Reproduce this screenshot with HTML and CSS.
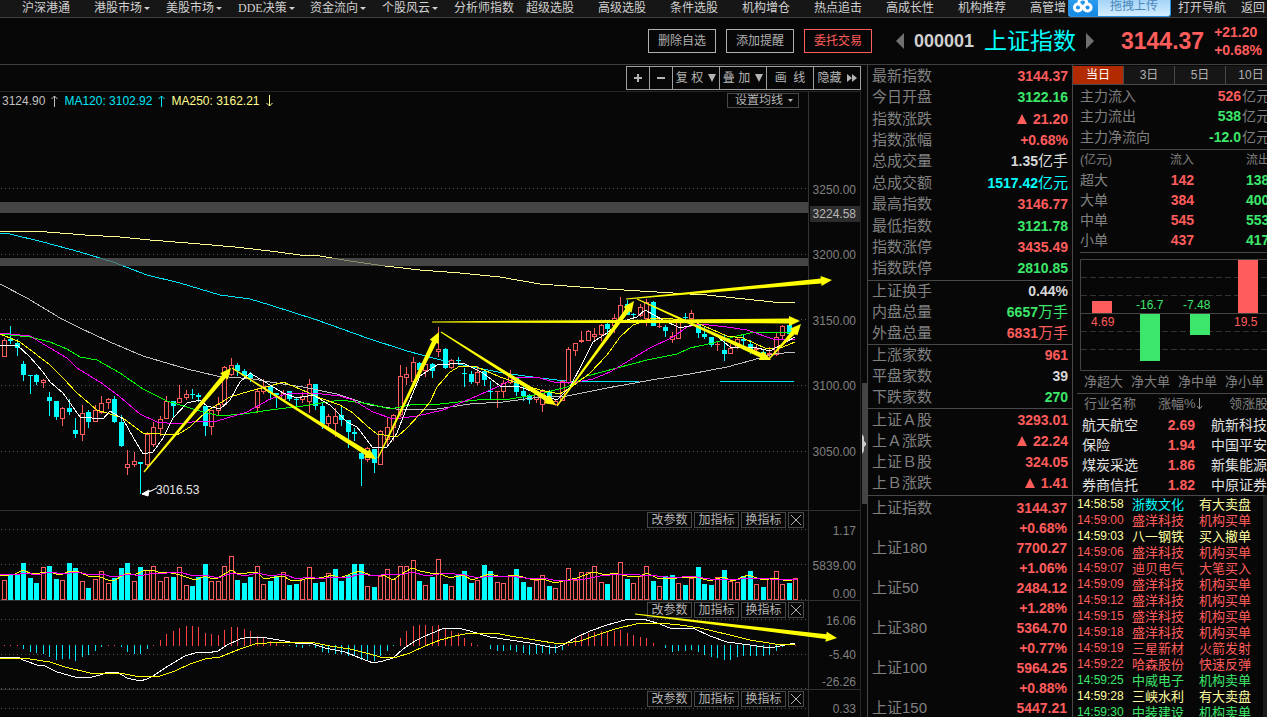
FILE: index.html
```html
<!DOCTYPE html>
<html lang="zh-CN">
<head>
<meta charset="utf-8">
<title>上证指数 000001</title>
<link rel="stylesheet" href="styles.css">
</head>
<body>
<nav class="nav">
  <div class="nav-list">
    <a href="#">沪深港通</a>
    <a href="#" class="has-menu">港股市场</a>
    <a href="#" class="has-menu">美股市场</a>
    <a href="#" class="has-menu dde">DDE决策</a>
    <a href="#" class="has-menu">资金流向</a>
    <a href="#" class="has-menu">个股风云</a>
    <a href="#">分析师指数</a>
    <a href="#">超级选股</a>
    <a href="#">高级选股</a>
    <a href="#">条件选股</a>
    <a href="#">机构增仓</a>
    <a href="#">热点追击</a>
    <a href="#">高成长性</a>
    <a href="#">机构推荐</a>
    <a href="#">高管增</a>
  </div>
  <button class="upload" type="button">
    <span class="upload-logo">
      <svg width="22" height="16" viewBox="0 0 22 16" aria-hidden="true">
        <g fill="none" stroke="#fff" stroke-width="3">
          <circle cx="6" cy="7.500" r="3.600"/>
          <circle cx="15.500" cy="7.500" r="3.600"/>
          <path d="M7 3.500Q6.500 -1 10.800 -1Q15 -1 14.500 3.500M8.500 5L13 10"/>
        </g>
      </svg>
    </span>
    <span class="upload-text">拖拽上传</span>
  </button>
  <div class="nav-right"><a href="#">打开导航</a><a href="#">返回</a></div>
</nav>

<header class="head">
  <button class="btn" type="button">删除自选</button>
  <button class="btn" type="button">添加提醒</button>
  <button class="btn trade" type="button">委托交易</button>
  <div class="title">
    <button class="step" type="button" aria-label="上一个"><svg width="8" height="16" viewBox="0 0 8 16"><path d="M8 0V16L0 8Z" fill="#707070"/></svg></button>
    <span class="code">000001</span>
    <h1>上证指数</h1>
    <button class="step" type="button" aria-label="下一个"><svg width="8" height="16" viewBox="0 0 8 16"><path d="M0 0V16L8 8Z" fill="#707070"/></svg></button>
  </div>
  <span class="last">3144.37</span>
  <div class="delta"><span>+21.20</span><span>+0.68%</span></div>
</header>

<main class="main">
  <section class="chart-col">
    <div class="toolbar">
      <button class="sq" type="button" aria-label="放大"><svg width="8" height="8"><path d="M0 4H8M4 0V8" stroke="#b4b4b4" stroke-width="2"/></svg></button>
      <button class="sq" type="button" aria-label="缩小"><svg width="8" height="8"><path d="M0 4H8" stroke="#b4b4b4" stroke-width="2"/></svg></button>
      <button type="button">复 权 <svg width="8" height="8"><path d="M0 0H8L4 8Z" fill="#b4b4b4"/></svg></button>
      <button type="button">叠 加 <svg width="8" height="8"><path d="M0 0H8L4 8Z" fill="#b4b4b4"/></svg></button>
      <button type="button">画&nbsp; 线</button>
      <button type="button">隐藏 <svg width="10" height="8"><path d="M0 0L5 4L0 8ZM5 0L10 4L5 8Z" fill="#b4b4b4"/></svg></button>
    </div>
    <div class="charts">
      <section class="panel">
        <div class="plot">
          <svg id="price" viewBox="0 92 808 418" preserveAspectRatio="none"></svg>
          <div class="legend">
            <span class="ma60">3124.90</span>
            <svg class="ma60" width="7" height="12"><path d="M3.500 12V1M0.500 4L3.500 1L6.500 4"/></svg>
            <span class="ma120">MA120: 3102.92</span>
            <svg class="ma120" width="7" height="12"><path d="M3.500 12V1M0.500 4L3.500 1L6.500 4"/></svg>
            <span class="ma250">MA250: 3162.21</span>
            <svg class="ma250" width="7" height="12"><path d="M3.500 0V11M0.500 8L3.500 11L6.500 8"/></svg>
          </div>
          <label class="ma-set"><select aria-label="设置均线"><option>设置均线</option></select><svg width="5" height="3"><path d="M0 0H5L2.500 3Z" fill="#b4b4b4"/></svg></label>
        </div>
        <div class="axis" data-from="92" data-to="510" data-labels="3250.00@189,3200.00@255,3150.00@320,3100.00@386,3050.00@452,3224.58@213*"></div>
      </section>
      <section class="panel">
        <div class="plot">
          <svg id="volume" viewBox="0 511 808 89" preserveAspectRatio="none"></svg>
          <div class="tools"><button type="button">改参数</button><button type="button">加指标</button><button type="button">换指标</button><button class="close" type="button" aria-label="关闭"><svg width="10" height="10"><path d="M0 0L10 10M10 0L0 10"/></svg></button></div>
        </div>
        <div class="axis" data-from="511" data-to="600" data-labels="1.17@531,5839.00@565,0.00@593"></div>
      </section>
      <section class="panel">
        <div class="plot">
          <svg id="macd" viewBox="0 601 808 88" preserveAspectRatio="none"></svg>
          <div class="tools"><button type="button">改参数</button><button type="button">加指标</button><button type="button">换指标</button><button class="close" type="button" aria-label="关闭"><svg width="10" height="10"><path d="M0 0L10 10M10 0L0 10"/></svg></button></div>
        </div>
        <div class="axis" data-from="601" data-to="689" data-labels="16.06@620,-5.40@655,-26.26@682"></div>
      </section>
      <section class="panel">
        <div class="plot">
          <svg id="extra" viewBox="0 690 808 27" preserveAspectRatio="none"></svg>
          <div class="tools"><button type="button">改参数</button><button type="button">加指标</button><button type="button">换指标</button><button class="close" type="button" aria-label="关闭"><svg width="10" height="10"><path d="M0 0L10 10M10 0L0 10"/></svg></button></div>
        </div>
        <div class="axis" data-from="690" data-to="717" data-labels="0.33@709"></div>
      </section>
      <svg id="drawings" viewBox="0 92 860 625" preserveAspectRatio="none"></svg>
    </div>
  </section>
  <div class="gutter"><div class="thumb"><svg width="5" height="20"><path d="M0 0L2 3V7L4 9V11L2 13V17L0 20Z" fill="#ccc"/></svg></div></div>

  <section class="quotes">
    <dl class="group g10">
      <div><dt>最新指数</dt><dd class="up">3144.37</dd></div>
      <div><dt>今日开盘</dt><dd class="down">3122.16</dd></div>
      <div><dt>指数涨跌</dt><dd class="up"><i class="tri"></i>21.20</dd></div>
      <div><dt>指数涨幅</dt><dd class="up">+0.68%</dd></div>
      <div><dt>总成交量</dt><dd class="flat">1.35<span>亿手</span></dd></div>
      <div><dt>总成交额</dt><dd class="cyan">1517.42<span>亿元</span></dd></div>
      <div><dt>最高指数</dt><dd class="up">3146.77</dd></div>
      <div><dt>最低指数</dt><dd class="down">3121.78</dd></div>
      <div><dt>指数涨停</dt><dd class="up">3435.49</dd></div>
      <div><dt>指数跌停</dt><dd class="down">2810.85</dd></div>
    </dl>
    <dl class="group g3">
      <div><dt>上证换手</dt><dd class="flat">0.44%</dd></div>
      <div><dt>内盘总量</dt><dd class="down">6657<span>万手</span></dd></div>
      <div><dt>外盘总量</dt><dd class="up">6831<span>万手</span></dd></div>
    </dl>
    <dl class="group g3">
      <div><dt>上涨家数</dt><dd class="up">961</dd></div>
      <div><dt>平盘家数</dt><dd class="flat">39</dd></div>
      <div><dt>下跌家数</dt><dd class="down">270</dd></div>
    </dl>
    <dl class="group g4">
      <div><dt>上证Ａ股</dt><dd class="up">3293.01</dd></div>
      <div><dt>上Ａ涨跌</dt><dd class="up"><i class="tri"></i>22.24</dd></div>
      <div><dt>上证Ｂ股</dt><dd class="up">324.05</dd></div>
      <div><dt>上Ｂ涨跌</dt><dd class="up"><i class="tri"></i>1.41</dd></div>
    </dl>
    <dl class="indices">
      <div><dt>上证指数</dt><dd>3144.37</dd><dd>+0.68%</dd></div>
      <div><dt>上证180</dt><dd>7700.27</dd><dd>+1.06%</dd></div>
      <div><dt>上证50</dt><dd>2484.12</dd><dd>+1.28%</dd></div>
      <div><dt>上证380</dt><dd>5364.70</dd><dd>+0.77%</dd></div>
      <div><dt>上证100</dt><dd>5964.25</dd><dd>+0.88%</dd></div>
      <div><dt>上证150</dt><dd>5447.21</dd></div>
    </dl>
  </section>

  <aside class="side">
    <div class="tabs"><button class="on" type="button">当日</button><button type="button">3日</button><button type="button">5日</button><button type="button">10日</button></div>
    <dl class="flow">
      <div><dt>主力流入</dt><dd class="up">526</dd><dd class="unit">亿元</dd></div>
      <div><dt>主力流出</dt><dd class="down">538</dd><dd class="unit">亿元</dd></div>
      <div><dt>主力净流向</dt><dd class="down">-12.0</dd><dd class="unit">亿元</dd></div>
    </dl>
    <table class="orders">
      <thead><tr><th>(亿元)</th><th>流入</th><th>流出</th></tr></thead>
      <tbody>
        <tr><td>超大</td><td class="up">142</td><td class="down">138</td></tr>
        <tr><td>大单</td><td class="up">384</td><td class="down">400</td></tr>
        <tr><td>中单</td><td class="up">545</td><td class="down">553</td></tr>
        <tr><td>小单</td><td class="up">437</td><td class="down">417</td></tr>
      </tbody>
    </table>
    <div class="net">
      <svg width="200" height="112" viewBox="1080 259 200 112">
        <g stroke="#333" stroke-dasharray="6 3"><path d="M1081 277.500H1280M1081 295.500H1280M1081 331.500H1280M1081 349.500H1280"/></g>
        <path d="M1280 259.500H1080.500V370.500H1280M1080 313.500H1280" fill="none" stroke="#444"/>
        <g fill="#ff5c5c"><path d="M1092 301h20v12h-20zM1238 260h20v53h-20z"/><text x="1091" y="326">4.69</text><text x="1234" y="326">19.5</text></g>
        <g fill="#3ce66a"><path d="M1140 314h20v47h-20zM1190 314h20v21h-20z"/><text x="1136" y="309">-16.7</text><text x="1183" y="309">-7.48</text></g>
      </svg>
      <div class="net-labels"><span>净超大</span><span>净大单</span><span>净中单</span><span>净小单</span></div>
    </div>
    <table class="sectors">
      <thead><tr><th>行业名称</th><th>涨幅%<svg width="7" height="12"><path d="M3.500 0V11M1 8L3.500 11L6 8" fill="none" stroke="#909090"/></svg></th><th>领涨股</th></tr></thead>
      <tbody>
        <tr><td>航天航空</td><td>2.69</td><td>航新科技</td></tr>
        <tr><td>保险</td><td>1.94</td><td>中国平安</td></tr>
        <tr><td>煤炭采选</td><td>1.86</td><td>新集能源</td></tr>
        <tr><td>券商信托</td><td>1.82</td><td>中原证券</td></tr>
      </tbody>
    </table>
    <div class="news">
      <table>
        <tr class="pale"><td>14:58:58</td><td class="cyan">浙数文化</td><td>有大卖盘</td></tr>
        <tr class="up"><td>14:59:00</td><td>盛洋科技</td><td>机构买单</td></tr>
        <tr class="pale"><td>14:59:03</td><td>八一钢铁</td><td>买入撤单</td></tr>
        <tr class="up"><td>14:59:06</td><td>盛洋科技</td><td>机构买单</td></tr>
        <tr class="up"><td>14:59:07</td><td>迪贝电气</td><td>大笔买入</td></tr>
        <tr class="up"><td>14:59:09</td><td>盛洋科技</td><td>机构买单</td></tr>
        <tr class="up"><td>14:59:12</td><td>盛洋科技</td><td>机构买单</td></tr>
        <tr class="up"><td>14:59:15</td><td>盛洋科技</td><td>机构买单</td></tr>
        <tr class="up"><td>14:59:18</td><td>盛洋科技</td><td>机构买单</td></tr>
        <tr class="up"><td>14:59:19</td><td>三星新材</td><td>火箭发射</td></tr>
        <tr class="up"><td>14:59:22</td><td>哈森股份</td><td>快速反弹</td></tr>
        <tr class="down"><td>14:59:25</td><td>中威电子</td><td>机构卖单</td></tr>
        <tr class="pale"><td>14:59:28</td><td>三峡水利</td><td>有大卖盘</td></tr>
        <tr class="down"><td>14:59:30</td><td>中装建设</td><td>机构卖单</td></tr>
      </table>
    </div>
  </aside>
</main>
<script src="chart.js"></script>
</body>
</html>
```
FILE: styles.css
```css
* { box-sizing: border-box; }
html, body { height: 100%; }
body {
  margin: 0;
  display: flex;
  flex-direction: column;
  overflow: hidden;
  background: #070707;
  color: #c8c8c8;
  font: 12px/16px "Liberation Sans", "Noto Sans CJK SC", sans-serif;
}
button, select { font: inherit; color: inherit; margin: 0; padding: 0; border: 0; background: none; }
a { color: inherit; text-decoration: none; }
dl, dd, h1 { margin: 0; }
svg { flex: none; }

.up { color: #ff5c5c; }
.down { color: #3ce66a; }
.flat { color: #d8d8d8; }
.cyan { color: #00ffff; }
.pale { color: #ffffa0; }

/* top navigation */
.nav { flex: none; display: flex; height: 18px; background: #161616; border-bottom: 1px solid #404040; color: #d0d0d0; }
.nav-list { flex: 1; min-width: 0; display: flex; overflow: hidden; padding-left: 22px; }
.nav-list a { flex: 0 0 72px; white-space: nowrap; line-height: 17px; }
.has-menu::after { content: ""; display: inline-block; margin-left: 2px; vertical-align: 2px; border: 3px solid transparent; border-top-color: #d0d0d0; border-bottom: 0; }
.dde { font-family: "Liberation Serif", "Noto Sans CJK SC", serif; }
.upload { flex: none; display: flex; width: 103px; height: 17px; overflow: hidden; border: 1px solid #2a90dc; border-top: 0; border-radius: 0 0 3px 3px; background: linear-gradient(#a4d4f8, #d4eeff); }
.upload-logo { display: flex; justify-content: center; width: 29px; height: 16px; background: linear-gradient(#2a9cf0, #1488e0); }
.upload-text { flex: 1; font-size: 12px; line-height: 12px; color: #4a88b8; }
.nav-right { flex: none; display: flex; gap: 15px; padding: 0 2px 0 7px; line-height: 17px; }

/* instrument header */
.head { flex: none; display: flex; align-items: center; justify-content: flex-end; gap: 10px; height: 47px; padding-right: 5px; border-bottom: 1px solid #404040; }
.btn { width: 68px; height: 24px; border: 1px solid #b0b0b0; color: #b0b0b0; }
.btn.trade { border-color: #ff5c5c; color: #ff5c5c; }
.title { display: flex; align-items: center; gap: 10px; margin: 0 17px 0 14px; }
.step { display: flex; }
.code { font: bold 18px/24px "Liberation Sans", sans-serif; color: #d0d0d0; }
h1 { font-size: 23px; line-height: 28px; font-weight: 400; color: #00ffff; }
.last { font: bold 23px/28px "Liberation Sans", sans-serif; color: #ff5c5c; }
.delta { display: flex; flex-direction: column; font: bold 14px/18px "Liberation Sans", sans-serif; color: #ff5c5c; }

.main { flex: 1; min-height: 0; display: flex; }

/* chart column */
.chart-col { flex: 1; min-width: 0; display: flex; flex-direction: column; }
.toolbar { flex: none; display: flex; justify-content: flex-end; align-items: center; height: 27px; border-bottom: 1px solid #262626; color: #b4b4b4; }
.toolbar button { display: flex; align-items: center; justify-content: center; gap: 5px; width: 48px; height: 24px; margin-left: -1px; border: 1px solid #a0a0a0; white-space: nowrap; }
.toolbar .sq { width: 24px; }
.charts { position: relative; flex: 1; min-height: 0; display: grid; grid-template-rows: 419fr 90fr 89fr 27fr; border-right: 1px solid #262626; }
.panel { display: grid; grid-template-columns: minmax(0, 1fr) 52px; min-height: 0; border-bottom: 1px solid #303030; }
.panel:last-of-type { border-bottom: 0; }
.plot { position: relative; min-height: 0; overflow: hidden; }
.plot > svg { display: block; width: 100%; height: 100%; position: absolute; inset: 0; }
#drawings { position: absolute; inset: 0; width: 100%; height: 100%; pointer-events: none; }
.axis { position: relative; border-left: 1px solid #333; color: #808080; }
.axis span { position: absolute; right: 0; width: 50px; padding-right: 4px; text-align: right; line-height: 16px; transform: translateY(-50%); }
.axis .mark { background: #2c2c2c; color: #b8b8b8; }
.legend { position: relative; display: flex; align-items: center; gap: 6px; padding-left: 2px; line-height: 18px; }
.legend svg { fill: none; stroke: currentColor; }
.ma60 { color: #c0c0c0; }
.ma120 { color: #00e5f5; }
.ma250 { color: #ffff90; }
.ma-set { position: absolute; top: 1px; right: 9px; display: flex; align-items: center; width: 72px; height: 15px; padding: 0 5px 0 7px; border: 1px solid #484848; background: #070707; color: #b4b4b4; }
.ma-set select { flex: 1; height: 13px; appearance: none; line-height: 13px; }
.tools { position: absolute; top: 1px; right: 4px; display: flex; gap: 2px; color: #b4b4b4; }
.tools button { display: flex; align-items: center; justify-content: center; width: 45px; height: 16px; border: 1px solid #484848; line-height: 14px; font-size: 12px; }
.tools .close { width: 16px; }
.tools svg { stroke: #b4b4b4; }

.gutter { flex: none; width: 7px; display: flex; flex-direction: column; align-items: flex-end; padding-top: 318px; border-right: 1px solid #484848; }
.thumb { display: flex; align-items: center; width: 5px; height: 121px; background: #444; }

/* quotes */
.quotes { flex: none; width: 205px; overflow: hidden; border-right: 1px solid #484848; }
.group { display: flex; flex-direction: column; padding: 0 4px 1px 4px; border-bottom: 1px solid #484848; }
.g10 { height: 216px; }
.g3 { height: 64px; }
.g4 { height: 87px; }
.group > div { flex: 1 1 0; min-height: 0; display: flex; align-items: center; justify-content: space-between; line-height: 18px; }
.quotes dt { font-size: 15px; color: #808080; }
.quotes dd { font: bold 14px/18px "Liberation Sans", sans-serif; }
.quotes dd span { font: 15px/16px "Noto Sans CJK SC", sans-serif; }
.tri { display: inline-block; margin-right: 6px; border: 5px solid transparent; border-top: 0; border-bottom: 10px solid currentColor; }
.indices { padding: 2px 5px 0 4px; color: #ff5c5c; }
.indices > div { display: grid; grid-template-columns: 1fr auto; grid-auto-rows: 20px; align-items: center; }
.indices dd { grid-column: 2; text-align: right; }

/* money flow */
.side { flex: none; width: 194px; overflow: hidden; display: flex; flex-direction: column; white-space: nowrap; }
.side > * { flex: none; }
.tabs { display: flex; height: 20px; padding-top: 1px; border-bottom: 1px solid #484848; }
.tabs button { flex: 0 0 51px; border-right: 1px solid #484848; background: #161616; color: #b0b0b0; line-height: 18px; }
.tabs .on { background: #b22a00; color: #fff; }
.flow { margin-left: 7px; padding: 1px 0; border-bottom: 1px solid #484848; }
.flow > div { display: flex; align-items: center; height: 20px; }
.flow > div:last-child { height: 22px; }
.flow dt { width: 80px; font-size: 14px; color: #808080; }
.flow dd { width: 81px; text-align: right; font: bold 14px/20px "Liberation Sans", sans-serif; }
.flow .unit { width: 30px; padding-left: 1px; text-align: left; font: 14px/18px "Liberation Sans", "Noto Sans CJK SC", sans-serif; color: #808080; }
.flow dt { flex: none; }
.flow dd { flex: none; }
table { border-collapse: collapse; table-layout: fixed; }
td, th { padding: 0; font-weight: 400; text-align: left; }
.orders { width: 210px; margin-left: 7px; color: #808080; font-size: 14px; }
.orders th { height: 20px; font-size: 12px; line-height: 16px; }
.orders th:nth-child(2), .orders td:nth-child(2) { width: 80px; text-align: right; }
.orders th:first-child { width: 34px; }
.orders td { height: 20px; line-height: 18px; }
.orders th:last-child, .orders td:last-child { padding-left: 52px; }
.orders .up, .orders .down { font-weight: bold; }
.net { margin-left: 7px; padding-top: 6px; border-top: 1px solid #484848; margin-top: 2px; }
.net svg { display: block; }
.net text { font-size: 12px; }
.net-labels { display: flex; gap: 8px; padding: 2px 0 0 4px; height: 22px; font-size: 13px; line-height: 18px; color: #808080; }
.sectors { width: 220px; margin-left: 4px; border-top: 1px solid #484848; }
.sectors th { height: 21px; font-size: 13px; line-height: 18px; color: #808080; padding-left: 7px; }
.sectors th:first-child { width: 74px; }
.sectors th:nth-child(2) { width: 60px; }
.sectors th:last-child { padding-left: 18px; }
.sectors th svg { vertical-align: -2px; }
.sectors td { height: 20px; padding-left: 5px; font-size: 14px; line-height: 18px; color: #e0e0e0; }
.sectors td:nth-child(2) { padding: 0 16px 0 0; text-align: right; font-weight: bold; color: #ff5c5c; }
.sectors td:last-child { padding-left: 0; }
.news { flex: 1 1 0; min-height: 0; overflow: hidden; border-top: 1px solid #484848; border-right: 4px solid #1c1c1c; }
.news table { width: 190px; margin: 1px 0 0 4px; }
.news td { height: 16px; line-height: 15px; font-size: 13px; }
.news td:first-child { width: 55px; font-size: 12px; }
.news td:nth-child(2) { width: 67px; }
```
FILE: chart.js
```js
const NS = 'http://www.w3.org/2000/svg';
const RED = '#ff5c5c', CYAN = '#00ffff';
const X0 = 4.4, STEP = 6.486;
const cx = i => Math.floor(X0 + STEP * i);

function add(svg, name, attrs, text) {
  const e = document.createElementNS(NS, name);
  for (const k in attrs) e.setAttribute(k, attrs[k]);
  if (text) e.textContent = text;
  svg.appendChild(e);
  return e;
}
const line = (svg, points, stroke) => add(svg, 'polyline', {
  points, stroke, fill: 'none', 'shape-rendering': 'crispEdges' });
const grid = (svg, ys) => ys.forEach(y => add(svg, 'path', {
  d: `M1 ${y + 0.5}H808`, stroke: '#585858', 'stroke-dasharray': '1 3', 'shape-rendering': 'crispEdges' }));
const rect = (svg, x, y, width, height, fill) => add(svg, 'rect', {
  x, y, width, height, fill, 'shape-rendering': 'crispEdges' });
const hollow = (svg, x, y, w, h) => {
  rect(svg, x, y, w, Math.max(h, 1), RED);
  if (h > 2) rect(svg, x + 1, y + 1, w - 2, h - 2, '#070707');
};

/* type, wick top, wick bottom, body top, body bottom */
const candles = `r338,357,340,357 d326,344,339,341 d339,356,343,348 d361,381,364,375 d375,394,375,376 d374,385,375,382
r379,388,380,383 d392,416,397,401 d401,420,401,417 r407,426,408,419 d399,415,408,412 d418,438,430,434
r405,441,413,435 d410,428,412,422 r405,422,410,422 r396,414,403,413 r398,409,399,403 d396,423,399,422
d415,447,422,446 r450,475,464,468 r452,467,461,465 d462,494,462,464 r432,469,434,465 r422,447,427,445
r416,436,419,429 r396,419,401,419 d401,417,401,406 r385,403,398,403 r390,400,394,398 d389,399,394,395
d393,402,395,397 d406,436,406,426 r410,435,410,427 r397,415,404,411 r366,405,367,405 r358,376,365,375
d363,376,365,371 d369,379,371,376 d372,382,374,379 r388,413,391,408 r379,394,386,392 d385,400,387,393
d393,408,393,395 r390,402,393,400 d391,401,391,399 d397,409,399,400 r392,403,396,400 r379,413,384,402
d384,410,384,406 d403,429,406,424 r414,431,416,424 r408,437,416,424 d405,426,415,420 d420,448,420,432
d428,441,432,434 d450,486,453,459 r447,462,448,460 d449,473,449,463 r430,465,431,465 r417,447,427,440
r414,441,415,428 r365,417,376,415 r367,385,374,378 r357,383,362,382 d362,377,363,370 r360,377,364,371
d363,378,364,371 r327,357,349,352 d348,369,349,368 r359,369,360,368 d357,363,360,361 d368,387,373,374
d371,384,374,382 r366,385,372,383 d369,386,371,380 d381,399,391,392 r391,408,391,392 r380,398,383,392
r370,384,376,383 d377,396,378,392 d384,401,391,396 d394,404,395,400 r392,403,394,400 r389,412,391,405
d390,400,392,398 r400,406,401,405 r380,401,381,401 r347,384,349,383 r343,356,343,351 r331,343,340,342
r330,341,331,341 r328,340,334,337 r324,341,325,335 d322,335,324,329 r314,333,318,326 r297,317,305,320
d300,315,304,315 d313,318,314,315 r304,317,307,316 r299,326,302,319 d301,326,302,326 r317,328,326,327
d325,337,327,331 r332,343,336,340 r317,339,320,339 d313,323,317,318 r310,320,313,319 d323,338,324,333
d327,339,334,337 d337,347,337,345 r341,351,344,345 d334,361,350,354 r344,354,348,354 r338,349,339,348
d335,350,339,341 d340,354,344,352 r344,351,348,350 d349,357,352,354 r347,359,353,355 r333,356,337,355
r325,340,326,336 d323,335,325,334 r328,335,330,334`.split(/\s+/)
  .map(s => [s[0], ...s.slice(1).split(',').map(Number)]);

const price = document.getElementById('price');
grid(price, [188, 254, 319, 385, 451]);
line(price, '0,231 33,231 60,233 85,235 120,237 150,240 200,244 235,247 270,251 300,255 320,256 350,261 385,266 420,270 460,273 500,277 540,284 607,289 673,293 707,295 773,302 795,303', '#ffff90');
line(price, '0,233 10,234 43,242 80,252 113,262 147,275 180,283 220,295 250,299 270,305 317,320 367,338 407,351 437,359 467,366 503,373 540,378 557,380 583,382 640,381 720,381 753,382 795,381', '#00e5f5');
rect(price, 0, 202, 808, 11, 'rgba(96,96,96,.7)');
rect(price, 0, 258, 808, 8, 'rgba(96,96,96,.7)');
candles.forEach(([t, wt, wb, bt, bb], i) => {
  const x = cx(i);
  if (t === 'r') {
    rect(price, x, wt, 1, wb - wt, RED);
    hollow(price, x - 2, bt, 5, bb - bt);
  } else {
    rect(price, x, wt, 1, wb - wt, CYAN);
    rect(price, x - 2, bt, 5, bb - bt, CYAN);
  }
});
line(price, '0,284 27,298 60,318 80,328 110,342 143,356 187,369 217,376 253,379 270,382 303,387 337,394 370,405 403,410 437,409 470,404 503,402 540,397 567,396 607,388 657,379 690,374 727,367 753,360 773,354 795,352', '#c0c0c0');
line(price, '0,334 30,337 50,342 67,349 80,357 97,360 120,373 143,389 167,401 200,411 220,416 243,414 270,410 303,406 340,400 370,404 390,409 410,405 440,404 477,400 510,399 540,394 567,387 587,376 617,368 647,360 677,354 690,348 713,343 733,337 750,333 795,332', '#00ff00');
line(price, '0,333 30,336 50,348 67,358 77,368 103,384 120,397 140,414 157,422 177,424 200,421 217,421 247,412 270,399 290,393 313,393 340,396 353,400 373,412 393,419 417,416 443,410 470,399 497,387 517,377 540,378 557,383 577,382 593,379 610,372 630,360 650,348 673,337 687,327 700,324 727,327 747,330 773,339 795,339', '#ff00ff');
line(price, '0,334 20,342 37,355 50,365 63,378 77,393 97,410 123,418 143,433 177,435 190,427 207,411 230,397 250,391 270,386 283,382 300,389 320,398 340,405 353,413 367,426 377,434 397,437 407,428 420,414 430,402 437,387 450,372 460,366 477,367 500,377 523,385 540,390 560,394 573,386 590,373 607,355 620,337 633,325 650,319 667,318 697,323 727,336 743,338 767,349 783,347 795,342', '#ffff00');
line(price, '0,345 17,345 30,357 43,372 50,382 63,393 80,417 103,419 110,411 123,419 133,437 143,454 153,452 163,438 173,418 187,403 200,400 207,406 220,409 230,400 240,382 250,373 270,385 283,393 297,398 313,395 330,405 347,422 357,427 373,448 387,447 397,433 407,407 420,376 437,365 463,363 483,373 500,386 520,387 540,394 557,400 570,387 583,362 593,342 607,333 620,322 637,317 645,310 663,320 680,328 693,325 713,333 730,347 753,347 770,351 795,337', '#ffffff');
add(price, 'path', { d: 'M157 488L151 491L142 494M142 494L149 490L148 496Z', stroke: '#fff', fill: '#fff' });
add(price, 'text', { x: 156, y: 494, fill: '#e8e8e8', 'font-size': 12 }, '3016.53');

const heights = `20 25 26 37 22 17 33 34 21 20 37 32 19 12 21 29 17 22 32 37 19 33 30 34 19 23 23 33 15 14 23 36 19 19 34 44
20 17 23 34 16 19 24 28 15 16 21 33 17 18 27 31 19 25 36 36 14 13 24 31 21 34 34 40 19 15
23 41 16 14 25 29 17 20 35 29 18 17 24 31 18 13 20 25 14 12 20 32 20 28 28 34 18 16 26 38 21 17 24 34 19 14 24 25 17 15 22 33 16 15
23 30 19 18 24 29 16 13 22 29 16 17 22`.split(/\s+/).map(Number);
const flipped = new Set([19, 51, 97, 103]);
const volume = document.getElementById('volume');
grid(volume, [529, 564, 599]);
heights.forEach((h, i) => {
  const red = (candles[i][0] === 'r') !== flipped.has(i);
  if (red) hollow(volume, cx(i) - 2, 600 - h, 5, h);
  else rect(volume, cx(i) - 2, 600 - h, 5, h, CYAN);
});
line(volume, '0,575 4,576 15,574 23,570 32,574 49,572 60,575 70,571 77,571 88,576 100,577 108,580 115,580 127,573 134,575 143,571 153,570 160,573 167,572 180,575 192,579 198,579 205,576 212,579 218,578 231,570 238,574 257,572 263,578 270,578 283,576 290,580 302,580 308,578 315,579 333,575 340,578 353,573 360,571 370,575 383,575 393,580 400,575 412,568 420,571 430,573 438,573 450,578 463,575 472,580 483,576 490,574 502,577 515,575 530,579 543,579 555,583 563,581 577,578 593,572 607,575 613,573 627,576 640,576 647,573 657,578 677,578 697,577 710,581 723,577 733,581 748,575 763,580 775,578 787,581 797,579', '#ffff00');
line(volume, '0,574 15,575 26,573 37,575 50,572 63,574 77,572 90,575 102,574 113,577 130,574 140,576 153,573 167,573 180,572 193,576 205,575 218,578 233,573 245,576 257,573 272,576 283,574 297,579 310,577 320,579 333,577 347,578 360,574 375,576 388,574 400,575 412,572 427,576 445,573 465,575 478,578 490,576 510,576 525,578 543,578 558,581 570,580 585,579 600,576 620,574 640,575 657,576 675,578 690,576 710,579 730,580 750,578 770,579 797,579', '#ff00ff');

const hist = `1 1 1 -4 -7 -8 -9 -12 -15 -14 -14 -16 -12 -10 -6 -2 1 1 -2 -7 -9 -9 -4 1 6 12 15 18 20 20 19 13 12 11 16 19
19 17 15 10 8 5 3 1 -1 -2 -3 -1 -3 -7 -8 -9 -9 -11 -11 -15 -15 -16 -11 -6 -1 8 15 20 21 21 20 21 17 15 13 8 3 1 0 -4 -6 -6 -5 -7 -8
-10 -9 -8 -9 -8 -5 2 8 11 13 14 15 14 15 16 13 11 9 8 3 0 -3 -7 -6 -6 -5 -7 -10 -12 -13 -15 -15 -12 -11 -11 -11 -11 -10 -6 -2 0 1`.split(/\s+/).map(Number);
const macd = document.getElementById('macd');
grid(macd, [619, 654, 688]);
hist.forEach((v, i) => {
  if (v > 0) rect(macd, cx(i), 646 - v, 1, v, '#ff4040');
  if (v < 0) rect(macd, cx(i), 645, 1, -v, '#00e5f5');
});
line(macd, '0,657 18,657 23,660 37,665 43,665 57,672 75,677 88,678 100,675 108,672 117,672 127,678 140,681 147,679 153,676 165,668 185,656 198,652 207,653 218,651 227,645 240,639 250,637 267,638 285,641 300,644 310,643 325,648 345,652 355,656 373,663 383,661 393,658 403,649 415,641 425,636 430,634 442,629 458,628 470,631 490,637 510,640 530,643 555,648 563,645 575,638 590,631 607,625 625,620 643,619 657,623 670,628 695,629 710,636 727,642 750,645 770,648 785,645 795,643', '#ffffff');
line(macd, '0,658 23,658 50,662 65,667 90,673 120,673 135,676 150,677 160,676 175,671 190,664 205,659 220,657 240,649 255,644 280,642 310,642 330,646 350,649 370,654 380,657 397,657 410,653 425,646 440,640 455,636 470,633 495,633 510,636 535,640 560,644 580,641 600,634 615,629 640,623 660,623 680,625 700,628 730,635 750,640 775,644 795,644', '#ffff00');

grid(document.getElementById('extra'), [708]);

/* tapered trend arrows */
const drawings = document.getElementById('drawings');
function arrow(x1, y1, x2, y2) {
  const len = Math.hypot(x2 - x1, y2 - y1);
  const ux = (x2 - x1) / len, uy = (y2 - y1) / len;
  const at = (d, s) => `${(x1 + ux * d - uy * s).toFixed(1)},${(y1 + uy * d + ux * s).toFixed(1)}`;
  const neck = len - 11;
  add(drawings, 'polygon', { fill: '#ffff00', points:
    [at(0, 0.6), at(len * 0.5, 1.4), at(neck, 2.4), at(neck, 5), at(len, 0), at(neck, -5), at(neck, -2.4), at(len * 0.5, -1.4), at(0, -0.6)].join(' ') });
}
arrow(144, 472, 231, 368);
arrow(232, 368, 376, 459);
arrow(378, 458, 439, 332);
arrow(441, 332, 556, 405);
arrow(557, 406, 634, 301);
arrow(637, 299, 771, 360);
arrow(769, 359, 801, 324);
arrow(432, 322, 800, 321);
arrow(626, 299, 832, 280);
arrow(635, 614, 837, 638);

/* axis labels: "text@y", a trailing star marks the highlighted value */
document.querySelectorAll('.axis').forEach(axis => {
  const from = +axis.dataset.from, to = +axis.dataset.to;
  axis.dataset.labels.split(',').forEach(item => {
    const [text, pos] = item.split('@');
    const s = document.createElement('span');
    s.textContent = text;
    s.style.top = ((parseInt(pos) + 0.5 - from) / (to - from) * 100).toFixed(2) + '%';
    if (pos.endsWith('*')) s.className = 'mark';
    axis.appendChild(s);
  });
});
```
